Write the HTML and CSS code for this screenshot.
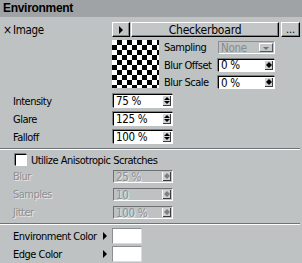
FILE: index.html
```html
<!DOCTYPE html>
<html lang="en">

<head>
    <meta charset="UTF-8">
    <title>Environment</title>
    <link rel="stylesheet" href="styles.css">
</head>

<body>
    <div class="panel">
        <div class="title">Environment</div>

        <div class="image-row">
            <span class="image-label"><span class="cross">×</span>Image</span>
            <button class="btn arrow-btn"><span class="tri"></span></button>
            <button class="btn shader-btn">Checkerboard</button>
            <button class="btn more-btn">...</button>
        </div>

        <div class="preview-row">
            <div class="checker"></div>
            <div class="preview-params">
                <div class="prow">
                    <span class="plabel">Sampling</span>
                    <div class="select">
                        <span class="val">None</span>
                        <span class="drop"></span>
                    </div>
                </div>
                <div class="prow">
                    <span class="plabel">Blur Offset</span>
                    <div class="field small">
                        <span class="val">0 %</span>
                        <span class="spin"></span>
                    </div>
                </div>
                <div class="prow">
                    <span class="plabel">Blur Scale</span>
                    <div class="field small">
                        <span class="val">0 %</span>
                        <span class="spin"></span>
                    </div>
                </div>
            </div>
        </div>

        <div class="params main">
            <div class="row">
                <span class="label">Intensity</span>
                <div class="field"><span class="val">75 %</span><span class="spin"></span></div>
            </div>
            <div class="row">
                <span class="label">Glare</span>
                <div class="field"><span class="val">125 %</span><span class="spin"></span></div>
            </div>
            <div class="row">
                <span class="label">Falloff</span>
                <div class="field"><span class="val">100 %</span><span class="spin"></span></div>
            </div>
        </div>

        <div class="sep"></div>

        <div class="check-row">
            <span class="checkbox"></span>
            <span>Utilize Anisotropic Scratches</span>
        </div>

        <div class="params disabled">
            <div class="row">
                <span class="label">Blur</span>
                <div class="field"><span class="val">25 %</span><span class="spin"></span></div>
            </div>
            <div class="row">
                <span class="label">Samples</span>
                <div class="field"><span class="val">10</span><span class="spin"></span></div>
            </div>
            <div class="row">
                <span class="label">Jitter</span>
                <div class="field"><span class="val">100 %</span><span class="spin"></span></div>
            </div>
        </div>

        <div class="sep"></div>

        <div class="colors">
            <div class="color-row">
                <span class="clabel">Environment Color</span>
                <span class="tri"></span>
                <span class="swatch"></span>
            </div>
            <div class="color-row">
                <span class="clabel">Edge Color</span>
                <span class="tri"></span>
                <span class="swatch"></span>
            </div>
        </div>
    </div>
</body>

</html>
```

FILE: styles.css
```css
body {
    margin: 0;
    padding: 0;
    background: #bec2c3;
    font-family: "DejaVu Sans Condensed", "Liberation Sans", Arial, sans-serif;
    font-size: 11px;
    letter-spacing: -0.5px;
    color: #000;
}

.panel {
    width: 302px;
    height: 263px;
    overflow: hidden;
    white-space: nowrap;
}

.title {
    height: 17px;
    line-height: 17px;
    padding-left: 3px;
    background: #9fa3a5;
    font-family: "Liberation Sans", Arial, sans-serif;
    font-weight: bold;
    font-size: 12px;
    letter-spacing: -0.3px;
}

/* image row */
.image-row {
    display: flex;
    align-items: center;
    height: 15px;
    margin-top: 5px;
    padding-left: 3px;
}

.image-label {
    width: 109px;
    display: flex;
    align-items: center;
    font-size: 11.5px;
    letter-spacing: -0.3px;
}

.cross {
    width: 10px;
    font-size: 12px;
}

.btn {
    height: 15px;
    padding: 0;
    margin: 0;
    background: #c3c6c7;
    border: 1px solid;
    border-color: #fff #000 #000 #fff;
    box-shadow: inset -1px -1px #7e8284;
    font-family: inherit;
    font-size: 11px;
    letter-spacing: -0.2px;
    color: #000;
    display: flex;
    align-items: center;
    justify-content: center;
}

.arrow-btn {
    width: 18px;
}

.shader-btn {
    width: 148px;
    margin-left: 1px;
    font-size: 12px;
}

.more-btn {
    width: 19px;
    margin-left: 2px;
}

.tri {
    width: 0;
    height: 0;
    border-top: 4px solid transparent;
    border-bottom: 4px solid transparent;
    border-left: 4px solid #000;
}

/* preview block */
.preview-row {
    display: flex;
    margin-top: 3px;
    padding-left: 112px;
}

.checker {
    width: 47px;
    height: 48px;
    background-color: #fff;
    background-image: conic-gradient(#000 25%, #fff 0 50%, #000 0 75%, #fff 0);
    background-size: 10px 10px;
}

.preview-params {
    margin-left: 5px;
    padding-top: 1px;
    display: flex;
    flex-direction: column;
    gap: 4.5px;
}

.prow {
    display: flex;
    align-items: center;
    height: 13px;
}

.plabel {
    width: 54px;
}

/* fields */
.field,
.select {
    display: flex;
    align-items: center;
    box-sizing: border-box;
    width: 60px;
    height: 14px;
    background: #fff;
    border: 1px solid;
    border-color: #000 #fff #fff #000;
    box-shadow: -1px -1px #7e8284;
}

.field.small,
.select {
    width: 57px;
    height: 13px;
}

.val {
    flex: 1;
    padding-left: 2px;
    font-size: 11.5px;
    letter-spacing: -0.3px;
    line-height: 12px;
}

.spin {
    position: relative;
    width: 8px;
    align-self: stretch;
    margin: 1px 1px 1px 0;
    background: #cfd2d3;
    border-left: 1px solid #fff;
    box-shadow: inset -1px -1px #3a3d3f;
}

.spin::before,
.spin::after {
    content: "";
    position: absolute;
    left: 1px;
    border-left: 3px solid transparent;
    border-right: 3px solid transparent;
}

.spin::before {
    top: 1px;
    border-bottom: 3px solid #000;
}

.spin::after {
    bottom: 2px;
    border-top: 3px solid #000;
}

.select {
    background: #bec2c3;
    border-color: #8a8e90 #fff #fff #8a8e90;
    box-shadow: none;
}

.select .val {
    color: #878b8d;
}

.drop {
    position: relative;
    width: 14px;
    align-self: stretch;
    margin: 1px 1px 1px 0;
    background: #c6c9ca;
    border: 1px solid;
    border-color: #fff #55595b #55595b #fff;
    box-sizing: border-box;
}

.drop::before {
    content: "";
    position: absolute;
    left: 3px;
    top: 3px;
    border-left: 3px solid transparent;
    border-right: 3px solid transparent;
    border-top: 3px solid #6e7274;
}

/* parameter rows */
.params {
    display: flex;
    flex-direction: column;
    padding-left: 13px;
}

.params.main {
    margin-top: 5px;
    gap: 4px;
}

.params.disabled {
    margin-top: 4px;
    gap: 5px;
}

.row {
    display: flex;
    align-items: center;
}

.label {
    width: 100px;
}

.params.disabled .row {
    height: 13px;
}

.params.disabled .field {
    height: 13px;
    background: #bec2c3;
    border-color: #6d7173 #fff #fff #6d7173;
    box-shadow: none;
}

.params.disabled .label,
.params.disabled .val {
    color: #8c9092;
    text-shadow: 1px 1px #e6e8e9;
}

.params.disabled .spin::before {
    border-bottom-color: #7c8082;
}

.params.disabled .spin::after {
    border-top-color: #7c8082;
}

.sep {
    height: 0;
    margin-top: 4px;
    border-top: 1px solid #6f7375;
    border-bottom: 1px solid #fff;
    margin-right: 2px;
}

.check-row {
    display: flex;
    align-items: center;
    gap: 4px;
    height: 12px;
    margin-top: 4px;
    padding-left: 15px;
}

.checkbox {
    box-sizing: border-box;
    width: 12px;
    height: 12px;
    background: #fff;
    border: 1px solid;
    border-color: #000 #fff #fff #000;
    box-shadow: -1px -1px #7e8284;
}

/* colour rows */
.colors {
    display: flex;
    flex-direction: column;
    gap: 2px;
    margin-top: 3px;
    padding-left: 13px;
}

.color-row {
    display: flex;
    align-items: center;
    height: 16px;
}

.clabel {
    width: 90px;
}

.color-row .tri {
    margin-right: 5px;
}

.swatch {
    box-sizing: border-box;
    width: 30px;
    height: 16px;
    background: #fff;
    border: 1px solid;
    border-color: #8a8e90 #d9dbdc #d9dbdc #8a8e90;
}
```
